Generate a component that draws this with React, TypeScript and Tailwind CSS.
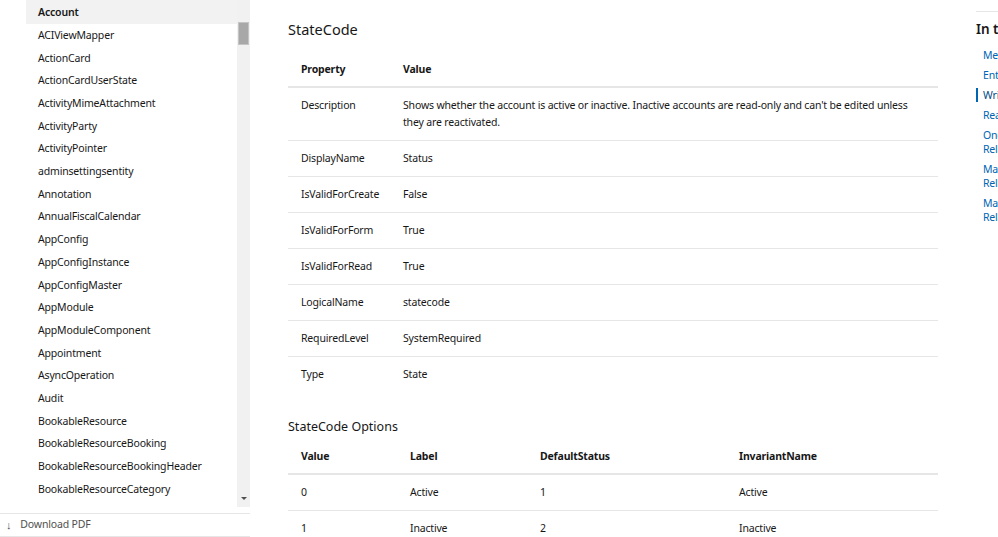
import React from "react";

const navItems = [
  "ACIViewMapper",
  "ActionCard",
  "ActionCardUserState",
  "ActivityMimeAttachment",
  "ActivityParty",
  "ActivityPointer",
  "adminsettingsentity",
  "Annotation",
  "AnnualFiscalCalendar",
  "AppConfig",
  "AppConfigInstance",
  "AppConfigMaster",
  "AppModule",
  "AppModuleComponent",
  "Appointment",
  "AsyncOperation",
  "Audit",
  "BookableResource",
  "BookableResourceBooking",
  "BookableResourceBookingHeader",
  "BookableResourceCategory",
];

const props: [string, string][] = [
  ["DisplayName", "Status"],
  ["IsValidForCreate", "False"],
  ["IsValidForForm", "True"],
  ["IsValidForRead", "True"],
  ["LogicalName", "statecode"],
  ["RequiredLevel", "SystemRequired"],
  ["Type", "State"],
];

const font = { fontFamily: '"Noto Sans", "Open Sans", sans-serif' };

export default function App() {
  return (
    <div
      className="w-[998px] h-[537px] overflow-hidden bg-white text-[#171717] flex text-[10.5px] tracking-[-0.17px]"
      style={font}
    >
      {/* Left nav */}
      <div className="w-[250px] shrink-0 flex flex-col h-[537px]">
        <div className="h-[507px] flex">
          <div className="w-[26px] shrink-0" />
          <div className="flex-1 overflow-hidden">
            <div className="h-[24px] bg-[#f2f2f2] pl-[12px] pt-[1px] flex items-center font-semibold">
              Account
            </div>
            {navItems.map((n) => (
              <div key={n} className="h-[22.7px] pl-[12px] pt-[1px] flex items-center">
                {n}
              </div>
            ))}
          </div>
          <div className="w-[13px] shrink-0 bg-[#f1f1f1] relative">
            <div className="absolute left-[1px] top-[22px] w-[11px] h-[23px] bg-[#a8a8a8] border border-[#c4c4c4]" />
            <div className="absolute left-[4px] bottom-[7px] w-0 h-0 border-l-[3px] border-r-[3px] border-t-[3px] border-l-transparent border-r-transparent border-t-[#505050]" />
          </div>
        </div>
        <div className="h-[6px]" />
        <div className="border-t border-b border-[#e6e6e6] h-[24px] flex items-center pl-[6px] text-[#505050]">
          <span className="mr-[9px] text-[11px]">↓</span>Download PDF
        </div>
      </div>

      {/* Main */}
      <div className="w-[650px] ml-[38px] shrink-0">
        <div className="mt-[19px] text-[14.5px] leading-[20px] tracking-normal">StateCode</div>
        <div className="mt-[14px]">
          <div className="flex h-[35px] items-center border-b-2 border-[#e6e6e6] font-bold">
            <div className="w-[115px] pl-[13px]">Property</div>
            <div>Value</div>
          </div>
          <div className="flex pt-[9px] pb-[9px] leading-[17px] border-b border-[#e6e6e6]">
            <div className="w-[115px] pl-[13px] shrink-0">Description</div>
            <div className="pr-[10px]">
              Shows whether the account is active or inactive. Inactive accounts are read-only and can't be edited unless they are reactivated.
            </div>
          </div>
          {props.map(([k, v], i) => (
            <div
              key={k}
              className={
                "flex items-center " +
                (i < props.length - 1 ? "border-b border-[#e6e6e6] h-[36px]" : "h-[35px]")
              }
            >
              <div className="w-[115px] pl-[13px] shrink-0">{k}</div>
              <div>{v}</div>
            </div>
          ))}
        </div>

        <div className="mt-[26px] text-[12.5px] leading-[18px] tracking-normal">StateCode Options</div>
        <div className="mt-[4px]">
          <div className="flex h-[35px] items-center border-b-2 border-[#e6e6e6] font-bold">
            <div className="w-[122px] pl-[13px]">Value</div>
            <div className="w-[130px]">Label</div>
            <div className="w-[199px]">DefaultStatus</div>
            <div>InvariantName</div>
          </div>
          <div className="flex h-[36px] items-center border-b border-[#e6e6e6]">
            <div className="w-[122px] pl-[13px]">0</div>
            <div className="w-[130px]">Active</div>
            <div className="w-[199px]">1</div>
            <div>Active</div>
          </div>
          <div className="flex h-[35px] items-center">
            <div className="w-[122px] pl-[13px]">1</div>
            <div className="w-[130px]">Inactive</div>
            <div className="w-[199px]">2</div>
            <div>Inactive</div>
          </div>
        </div>
      </div>

      {/* Right rail */}
      <div className="w-[120px] ml-[38px] shrink-0 mt-[11px] border-t border-[#e6e6e6]">
        <div className="mt-[8px] text-[13.5px] leading-[18px] font-semibold tracking-normal">In this article</div>
        <div className="mt-[10px] flex flex-col gap-[6px] text-[#0065b3] leading-[14px]">
          <div className="pl-[7px]">Messages</div>
          <div className="pl-[7px]">Entity Properties</div>
          <div className="pl-[5px] border-l-2 border-[#0065b3] text-[#004b87]">Writable attributes</div>
          <div className="pl-[7px]">Read-only attributes</div>
          <div className="pl-[7px]">One-To-Many Relationships</div>
          <div className="pl-[7px]">Many-To-One Relationships</div>
          <div className="pl-[7px]">Many-To-Many Relationships</div>
        </div>
      </div>
    </div>
  );
}
